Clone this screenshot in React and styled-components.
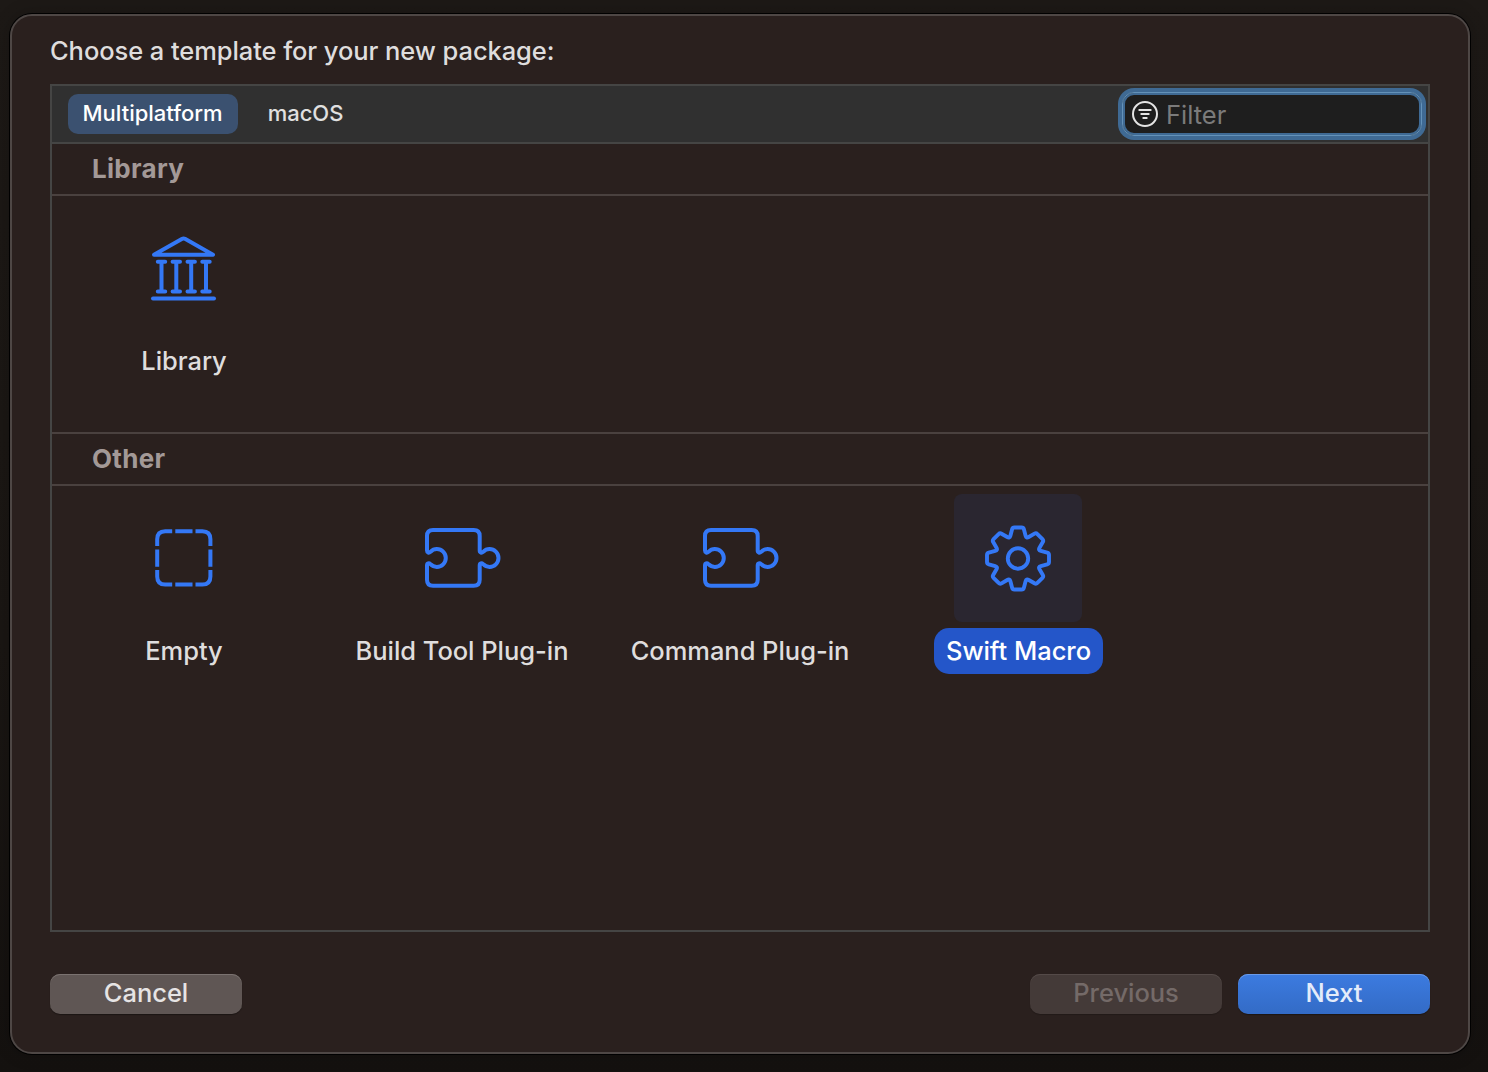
import React from "react";
import styled, { createGlobalStyle, css } from "styled-components";

const accent = "#3478f6";

const GlobalStyle = createGlobalStyle`
  *, *::before, *::after { box-sizing: border-box; }
  body {
    margin: 0;
    background: #1b1714;
    font-family: Inter, "Liberation Sans", sans-serif;
  }
  button { font-family: inherit; margin: 0; padding: 0; border: 0; }
`;

const Desktop = styled.div`
  height: 1072px;
  padding: 14px 18px 18px 10px;
  background: linear-gradient(#1d1916, #1a1613 60%, #14110f);
  overflow: hidden;
`;

const Sheet = styled.main`
  display: flex;
  flex-direction: column;
  height: 1040px;
  padding: 20px 38px 38px;
  border: 2px solid #4e4745;
  border-radius: 22px;
  background: #2a201e;
  box-shadow: 0 0 0 1px #000, 0 0 16px 2px rgba(0, 0, 0, 0.18);
`;

const Title = styled.h1`
  margin: 0 0 18px;
  font-size: 25.5px;
  font-weight: 450;
  letter-spacing: -0.08px;
  line-height: 30px;
  color: #dfdddd;
`;

const Chooser = styled.section`
  height: 848px;
  border: 2px solid #454544;
`;

const Toolbar = styled.header`
  display: flex;
  align-items: center;
  height: 58px;
  padding: 0 6px 0 16px;
  background: #303030;
  border-bottom: 2px solid #454544;
`;

const Tab = styled.button`
  height: 40px;
  padding: 0 15px 2px 14.5px;
  border-radius: 10px;
  font-size: 22px;
  font-weight: ${(p) => (p.$active ? 520 : 450)};
  color: ${(p) => (p.$active ? "#fff" : "#e0e0e0")};
  background: ${(p) => (p.$active ? "#3b5170" : "transparent")};
  & + & { margin-left: 15.5px; }
`;

const FilterField = styled.div`
  display: flex;
  align-items: center;
  width: 300px;
  height: 44px;
  margin-left: auto;
  padding-left: 9px;
  gap: 8px;
  border: 1px solid #6492b9;
  border-radius: 12px;
  background: #1e1e1e;
  box-shadow: 0 0 0 4px #3f6a94, inset 0 0 0 2px #3f6a94;
`;

const FilterPlaceholder = styled.span`
  padding-top: 1px;
  font-size: 25.5px;
  font-weight: 440;
  line-height: 30px;
  color: #7b7b7b;
`;

const GroupHeader = styled.h2`
  margin: 0;
  padding-left: 40px;
  height: 52px;
  border-bottom: 2px solid #4a413f;
  font-size: 26px;
  font-weight: 700;
  letter-spacing: 0.3px;
  line-height: 50px;
  color: #a39997;
`;

const GroupBody = styled.div`
  display: grid;
  grid-template-columns: repeat(4, 264px);
  column-gap: 14px;
  align-content: start;
  height: ${(p) => p.$height}px;
  padding-top: 8px;
  border-bottom: ${(p) => (p.$last ? "0" : "2px solid #4a413f")};
`;

const Template = styled.div`
  display: flex;
  flex-direction: column;
  align-items: center;
  gap: 6px;
`;

const IconWell = styled.div`
  display: flex;
  align-items: center;
  justify-content: center;
  width: 128px;
  height: 128px;
  border-radius: 8px;
  background: ${(p) => (p.$selected ? "#2a2630" : "transparent")};
`;

const Label = styled.div`
  height: 46px;
  padding: 0 12px;
  border-radius: 15px;
  font-size: 25.5px;
  font-weight: 450;
  letter-spacing: -0.04px;
  line-height: 46px;
  white-space: nowrap;
  color: #dfdddd;
  ${(p) =>
    p.$selected &&
    css`
      margin-left: 1px;
      padding: 0 12.3px;
      color: #fff;
      background: #2456c9;
    `}
`;

const Footer = styled.footer`
  display: flex;
  gap: 16px;
  margin-top: 42px;
`;

const variants = {
  plain: css`
    color: #e6e4e4;
    background: #5f5654;
    box-shadow: inset 0 1px 0 #7a7270, 0 1px 1px rgba(0, 0, 0, 0.35);
  `,
  disabled: css`
    color: #746a68;
    background: #443a38;
    box-shadow: inset 0 1px 0 #544a48, 0 1px 1px rgba(0, 0, 0, 0.2);
  `,
  primary: css`
    color: #e4ecfa;
    background: linear-gradient(#3c7be0, #336bc6);
    box-shadow: inset 0 1px 0 #6a9ae8, 0 1px 1px rgba(0, 0, 0, 0.35);
  `,
};

const Button = styled.button`
  width: 192px;
  height: 40px;
  padding-bottom: 3px;
  border-radius: 10px;
  font-size: 25.5px;
  font-weight: 450;
  letter-spacing: -0.04px;
  ${(p) => variants[p.$variant]}
  &:first-child { margin-right: auto; }
`;

const Glyph = styled.svg`
  display: block;
  flex: none;
  overflow: visible;
  fill: none;
  stroke: ${(p) => p.$color || accent};
  stroke-width: ${(p) => p.$weight || 4};
  stroke-linecap: ${(p) => p.$cap || "round"};
  stroke-linejoin: round;
`;

const FilterIcon = () => (
  <Glyph $color="#e4e4e4" $weight={2} width="26" height="26" viewBox="0 0 26 26">
    <circle cx="13" cy="13" r="12" />
    <path d="M7.3 9H18.7M9.3 13H16.7M11.3 17H14.7" />
  </Glyph>
);

const columns = [9.5, 24.3, 39.2, 54];

const LibraryIcon = () => (
  <Glyph width="128" height="128" viewBox="-32 -32 128 128">
    <path d="M2 18.7L29.8 3Q31.6 2 33.4 3L61 18.7Z" />
    {columns.map((x) => (
      <path key={x} d={`M${x - 3.7} 25.7H${x + 3.7}M${x} 25.7V55.4M${x - 3.7} 55.4H${x + 3.7}`} />
    ))}
    <path d="M1 62.5H62" />
  </Glyph>
);

const EmptyIcon = () => (
  <Glyph $cap="butt" width="128" height="128" viewBox="-64 -64 128 128">
    <path d="M-11.8 -26.8H-18.8Q-26.8 -26.8 -26.8 -18.8V-12M-8.7 -26.8H8.5M11.5 -26.8H18.4Q26.4 -26.8 26.4 -18.8V-12M26.4 -8.5V8.8M26.4 12V18.5Q26.4 26.5 18.4 26.5H11.5M8.5 26.5H-8.7M-11.8 26.5H-18.8Q-26.8 26.5 -26.8 18.5V12M-26.8 8.8V-8.5" />
  </Glyph>
);

const PuzzleIcon = () => (
  <Glyph width="128" height="128" viewBox="398 494 128 128">
    <path d="M433 530H473.7Q479.7 530 479.7 536V550.6C479.7 552.8 481.6 553.2 483.2 551.8A8.9 8.9 0 1 1 483.2 564.2C481.6 562.8 479.7 563.2 479.7 565.4V579.8Q479.7 585.8 473.7 585.8H433Q427 585.8 427 579.8V565.4C427 563.2 428.9 562.8 430.5 564.2A8.9 8.9 0 1 0 430.5 551.8C428.9 553.2 427 552.8 427 550.6V536Q427 530 433 530Z" />
  </Glyph>
);

/* Each tooth is the same profile turned by 45 degrees; tips and roots are rounded. */
const gearPath = (() => {
  const turn = (x, y, k) => {
    const a = (k * Math.PI) / 4;
    return `${(x * Math.cos(a) - y * Math.sin(a)).toFixed(2)} ${(x * Math.sin(a) + y * Math.cos(a)).toFixed(2)}`;
  };
  let d = "";
  for (let k = 0; k < 8; k += 1) {
    d += `${k ? "L" : "M"}${turn(-7.6, -22.8, k)}L${turn(-5.9, -29.2, k)}Q${turn(-5.4, -31, k)} ${turn(-3.6, -31, k)}`;
    d += `L${turn(3.6, -31, k)}Q${turn(5.4, -31, k)} ${turn(5.9, -29.2, k)}L${turn(7.6, -22.8, k)}`;
    d += `Q${turn(8.3, -20.1, k)} ${turn(-7.6, -22.8, k + 1)}`;
  }
  return `${d}Z`;
})();

const GearIcon = () => (
  <Glyph $weight={3.9} width="128" height="128" viewBox="-64 -64.5 128 128">
    <path d={gearPath} />
    <circle r="10.2" />
  </Glyph>
);

const groups = [
  { name: "Library", height: 238, items: [{ name: "Library", Icon: LibraryIcon }] },
  {
    name: "Other",
    height: 444,
    items: [
      { name: "Empty", Icon: EmptyIcon },
      { name: "Build Tool Plug-in", Icon: PuzzleIcon },
      { name: "Command Plug-in", Icon: PuzzleIcon },
      { name: "Swift Macro", Icon: GearIcon, selected: true },
    ],
  },
];

export default function App() {
  return (
    <Desktop>
      <GlobalStyle />
      <Sheet>
        <Title>Choose a template for your new package:</Title>
        <Chooser>
          <Toolbar>
            <Tab $active>Multiplatform</Tab>
            <Tab>macOS</Tab>
            <FilterField>
              <FilterIcon />
              <FilterPlaceholder>Filter</FilterPlaceholder>
            </FilterField>
          </Toolbar>
          {groups.map((group, i) => (
            <React.Fragment key={group.name}>
              <GroupHeader>{group.name}</GroupHeader>
              <GroupBody $height={group.height} $last={i === groups.length - 1}>
                {group.items.map(({ name, Icon, selected }) => (
                  <Template key={name}>
                    <IconWell $selected={selected}>
                      <Icon />
                    </IconWell>
                    <Label $selected={selected}>{name}</Label>
                  </Template>
                ))}
              </GroupBody>
            </React.Fragment>
          ))}
        </Chooser>
        <Footer>
          <Button $variant="plain">Cancel</Button>
          <Button $variant="disabled">Previous</Button>
          <Button $variant="primary">Next</Button>
        </Footer>
      </Sheet>
    </Desktop>
  );
}
